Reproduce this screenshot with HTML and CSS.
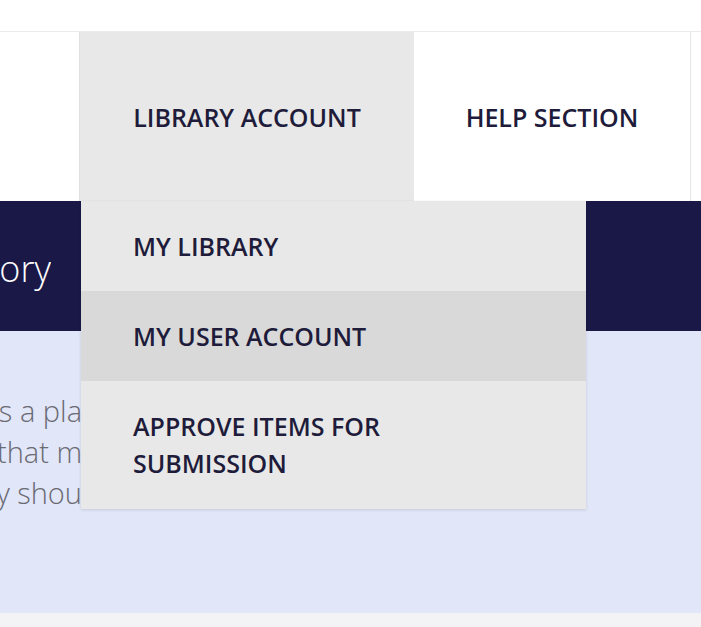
FILE: index.html
```html
<!DOCTYPE html>
<html lang="en">
<head>
<meta charset="utf-8">
<title>Library Account</title>
<link rel="stylesheet" href="styles.css">
</head>
<body>
<div class="topbar"></div>
<header class="nav">
  <div class="nav-spacer"></div>
  <div class="nav-item nav-item--active nav-item--library">
    <span class="nav-label">LIBRARY ACCOUNT</span>
    <ul class="dropdown">
      <li class="dropdown-item">MY LIBRARY</li>
      <li class="dropdown-item dropdown-item--hover">MY USER ACCOUNT</li>
      <li class="dropdown-item dropdown-item--tall">APPROVE ITEMS FOR<br>SUBMISSION</li>
    </ul>
  </div>
  <div class="nav-item nav-item--help"><span class="nav-label">HELP SECTION</span></div>
  <div class="nav-fill"></div>
</header>
<section class="banner">
  <div class="banner-clip"><h1 class="banner-title">Welcome to the Repository</h1></div>
</section>
<section class="intro">
  <div class="intro-clip">
    <p class="intro-line">This repository provides a pla</p>
    <p class="intro-line">for research outputs that m</p>
    <p class="intro-line">and they shou</p>
  </div>
</section>
<footer class="footer"></footer>
</body>
</html>
```

FILE: styles.css
```css
* { box-sizing: border-box; }
html, body { margin: 0; padding: 0; }
body {
  width: 701px;
  height: 627px;
  overflow: hidden;
  background: #ffffff;
  font-family: "Open Sans", "Noto Sans", sans-serif;
}
.topbar {
  height: 32px;
  border-bottom: 1px solid #ececec;
}
.nav {
  display: flex;
  height: 169px;
  position: relative;
  z-index: 2;
}
.nav-spacer {
  width: 80px;
  border-right: 1px solid #e0e0e0;
}
.nav-item {
  display: flex;
  align-items: center;
  justify-content: center;
  position: relative;
}
.nav-item--library { width: 334px; }
.nav-item--help {
  width: 277px;
  border-right: 1px solid #e6e6e6;
}
.nav-item--active { background: #e8e8e8; }
.nav-fill { flex: 1; }
.nav-label {
  font-size: 25px;
  font-weight: 560;
  font-stretch: 90%;
  color: #1e1c3a;
  white-space: nowrap;
}
.dropdown {
  position: absolute;
  top: 100%;
  left: 1px;
  width: 505px;
  margin: 0;
  padding: 0;
  list-style: none;
  background: #e8e8e8;
  box-shadow: 0 1px 3px rgba(0, 0, 0, 0.12);
}
.dropdown-item {
  display: flex;
  align-items: center;
  height: 90px;
  padding: 0 52px;
  font-size: 25px;
  font-weight: 560;
  font-stretch: 90%;
  color: #1e1c3a;
  white-space: nowrap;
}
.dropdown-item--hover { background: #d9d9d9; }
.dropdown-item--tall {
  height: 128px;
  line-height: 37px;
}
.banner {
  height: 130px;
  background: #1a1847;
  display: flex;
  align-items: center;
}
.banner-clip {
  width: 51px;
  display: flex;
  justify-content: flex-end;
  overflow: hidden;
  padding-top: 4px;
}
.banner-title {
  margin: 0;
  font-size: 36px;
  font-weight: 300;
  font-stretch: 90%;
  color: #ffffff;
  white-space: nowrap;
}
.intro {
  height: 282px;
  background: #e1e6f8;
  padding-top: 59px;
}
.intro-clip { width: 82px; }
.intro-line {
  margin: 0;
  height: 41px;
  display: flex;
  justify-content: flex-end;
  overflow: hidden;
  font-size: 29px;
  line-height: 41px;
  font-weight: 300;
  font-stretch: 90%;
  color: #6a6a72;
  white-space: nowrap;
}
.footer {
  height: 14px;
  background: #f3f3f5;
}
```
